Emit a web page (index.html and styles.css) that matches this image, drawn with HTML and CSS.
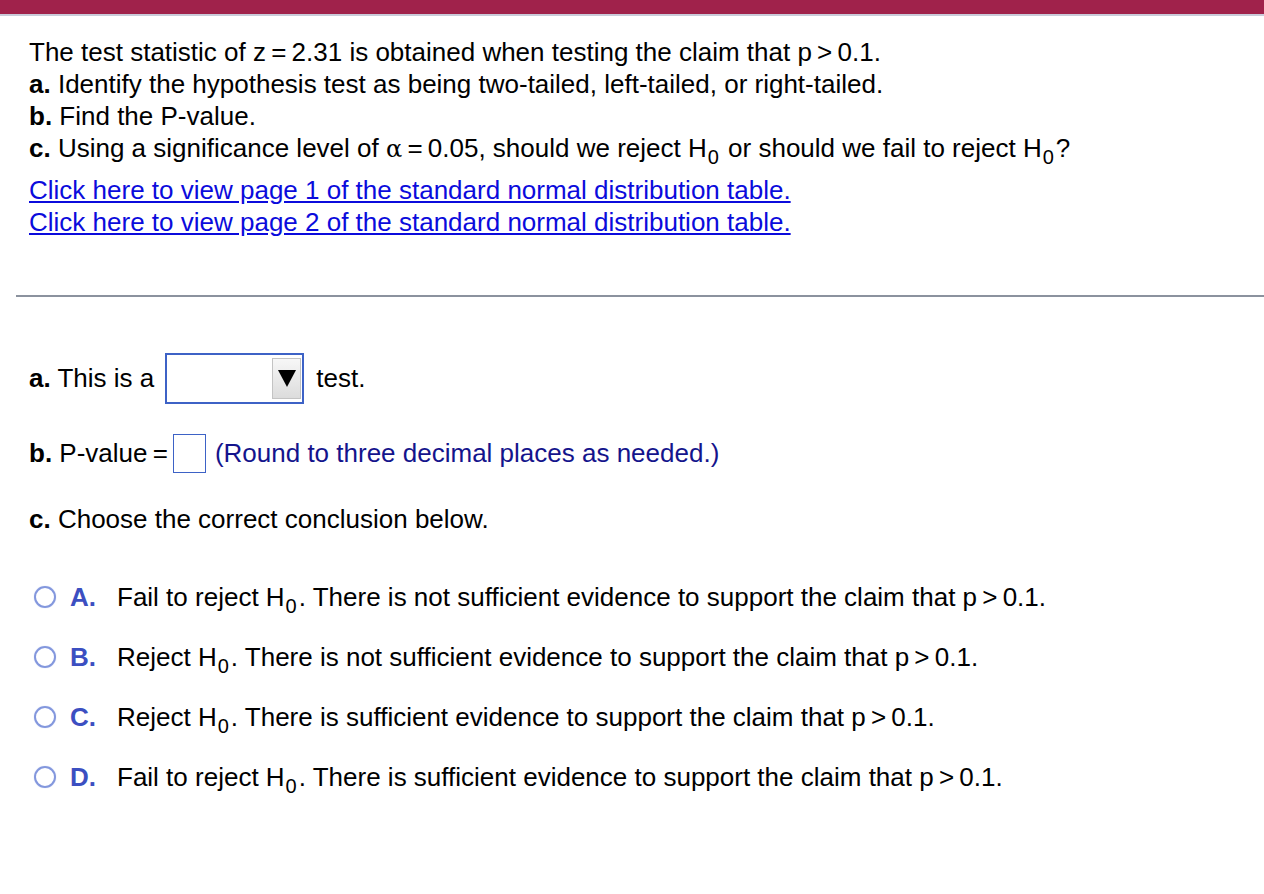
FILE: index.html
```html
<!DOCTYPE html>
<html>
<head>
<meta charset="utf-8">
<link rel="stylesheet" href="styles.css">
</head>
<body>
<div class="topbar"></div>
<div class="question">
  <div class="line">The test statistic of z&#8201;=&#8201;2.31 is obtained when testing the claim that p&#8201;&gt;&#8201;0.1.</div>
  <div class="line"><b>a.</b> Identify the hypothesis test as being two-tailed, left-tailed, or right-tailed.</div>
  <div class="line"><b>b.</b> Find the P-value.</div>
  <div class="line"><b>c.</b> Using a significance level of <span class="alpha">α</span>&#8201;=&#8201;0.05, should we reject H<sub>0</sub> or should we fail to reject H<sub>0</sub>?</div>
  <div class="links">
    <a href="#" class="link">Click here to view page 1 of the standard normal distribution table.</a>
    <a href="#" class="link">Click here to view page 2 of the standard normal distribution table.</a>
  </div>
</div>
<div class="divider"></div>
<div class="answers">
  <div class="row row-a">
    <span><b>a.</b> This is a</span>
    <span class="select"><span class="select-btn"><span class="tri"></span></span></span>
    <span>test.</span>
  </div>
  <div class="row row-b">
    <span><b>b.</b> P-value&#8201;=</span>
    <span class="input"></span>
    <span class="hint">(Round to three decimal places as needed.)</span>
  </div>
  <div class="row row-c">
    <span><b>c.</b> Choose the correct conclusion below.</span>
  </div>
  <div class="options">
    <div class="option"><span class="radio"></span><span class="letter">A.</span><span class="otext">Fail to reject H<sub>0</sub>. There is not sufficient evidence to support the claim that p&#8201;&gt;&#8201;0.1.</span></div>
    <div class="option"><span class="radio"></span><span class="letter">B.</span><span class="otext">Reject H<sub>0</sub>. There is not sufficient evidence to support the claim that p&#8201;&gt;&#8201;0.1.</span></div>
    <div class="option"><span class="radio"></span><span class="letter">C.</span><span class="otext">Reject H<sub>0</sub>. There is sufficient evidence to support the claim that p&#8201;&gt;&#8201;0.1.</span></div>
    <div class="option"><span class="radio"></span><span class="letter">D.</span><span class="otext">Fail to reject H<sub>0</sub>. There is sufficient evidence to support the claim that p&#8201;&gt;&#8201;0.1.</span></div>
  </div>
</div>
</body>
</html>
```

FILE: styles.css
```css
html, body {
  margin: 0;
  padding: 0;
  background: #fff;
}
body {
  font-family: "Liberation Sans", Arial, sans-serif;
  font-size: 26px;
  color: #000;
}
.topbar {
  height: 14px;
  background: #a0224b;
  border-bottom: 2px solid #c9cbd9;
}
.question {
  padding: 20px 0 0 29px;
}
.line {
  line-height: 32px;
  height: 32px;
  white-space: nowrap;
}
sub {
  font-size: 20px;
  vertical-align: -7px;
  line-height: 0;
  margin-left: 1px;
  margin-right: 2px;
}
.alpha {
  font-family: "DejaVu Serif", "Liberation Serif", serif;
  font-size: 24px;
}
.links {
  margin-top: 10px;
  display: flex;
  flex-direction: column;
  align-items: flex-start;
}
.link {
  color: #0b0bdc;
  text-decoration: underline;
  line-height: 32px;
}
.divider {
  margin: 57px 0 0 16px;
  height: 2px;
  background: #8b929e;
}
.answers {
  padding-left: 29px;
}
.row {
  display: flex;
  align-items: center;
  gap: 10px;
}
.row-a {
  margin-top: 56px;
}
.select {
  width: 134px;
  height: 47px;
  border: 2px solid #3d62c6;
  display: flex;
  justify-content: flex-end;
  align-items: center;
  padding-right: 1px;
  margin-left: 1px;
}
.select-btn {
  width: 27px;
  height: 39px;
  border: 1px solid #c3c3c3;
  background: linear-gradient(#f7f7f7, #dcdcdc);
  display: flex;
  align-items: center;
  justify-content: center;
}
.tri {
  width: 0;
  height: 0;
  border-left: 9px solid transparent;
  border-right: 9px solid transparent;
  border-top: 17px solid #000;
}
.row-a .select + span {
  margin-left: 2px;
}
.row-b {
  margin-top: 30px;
  gap: 9px;
}
.row-b .input {
  width: 31px;
  height: 37px;
  border: 1.5px solid #3d62c6;
  margin-left: -4px;
}
.hint {
  color: #14148c;
}
.row-c {
  margin-top: 31px;
}
.options {
  margin-top: 32px;
  padding-left: 5px;
}
.option {
  display: flex;
  align-items: center;
  height: 60px;
}
.radio {
  width: 18px;
  height: 18px;
  border: 2px solid #8397dd;
  border-radius: 50%;
  box-shadow: 0 0 1px #b6c2ee;
}
.letter {
  font-weight: bold;
  color: #3c4fc1;
  margin-left: 14px;
  width: 47px;
}
```
